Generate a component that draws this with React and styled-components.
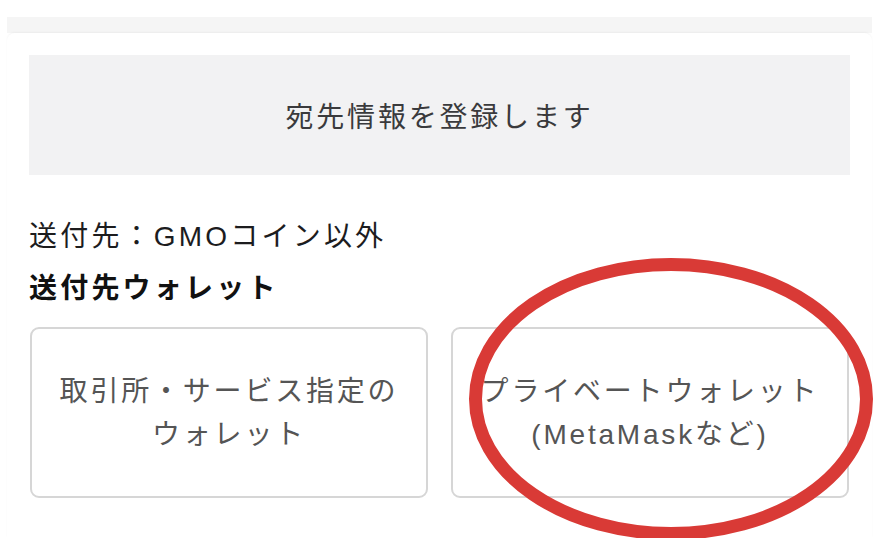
import React from "react";
import styled, { createGlobalStyle } from "styled-components";

const GlobalStyle = createGlobalStyle`
  body {
    margin: 0;
    background: #ffffff;
    font-family: "Liberation Sans", "Noto Sans CJK JP", sans-serif;
  }
`;

const Frame = styled.div`
  width: 865px;
  margin: 17px 0 0 7px;
`;

const TopStrip = styled.div`
  height: 16px;
  background: #f5f5f5;
`;

const Sheet = styled.div`
  background: #ffffff;
  border-radius: 8px 8px 0 0;
  box-shadow: 0 -1px 2px rgba(0, 0, 0, 0.04);
  padding: 22px 22px 40px;
`;

const Banner = styled.div`
  height: 120px;
  background: #f2f2f3;
  display: flex;
  align-items: center;
  justify-content: center;
  font-size: 28px;
  letter-spacing: 2.8px;
  color: #3a3a3c;
`;

const InfoLine = styled.div`
  margin-top: 44px;
  line-height: 36px;
  font-size: 28px;
  letter-spacing: 3.2px;
  color: #1c1c1e;
`;

const SectionTitle = styled.div`
  margin-top: 16px;
  line-height: 36px;
  font-size: 28px;
  font-weight: 700;
  letter-spacing: 3.2px;
  color: #111111;
`;

const Options = styled.div`
  margin-top: 20px;
  display: grid;
  grid-template-columns: 1fr 1fr;
  gap: 23px;
  padding: 0 1px;
`;

const OptionCard = styled.div`
  position: relative;
  height: 171px;
  box-sizing: border-box;
  border: 2px solid #d6d6d6;
  border-radius: 9px;
  display: flex;
  align-items: center;
  justify-content: center;
  text-align: center;
  font-size: 28px;
  line-height: 43px;
  letter-spacing: 2.8px;
  color: #555555;
`;

const Mark = styled.svg`
  position: absolute;
  left: 16px;
  top: -71px;
  overflow: visible;
  pointer-events: none;
`;

function App() {
  return (
    <>
      <GlobalStyle />
      <Frame>
        <TopStrip />
        <Sheet>
          <Banner>宛先情報を登録します</Banner>
          <InfoLine>送付先：GMOコイン以外</InfoLine>
          <SectionTitle>送付先ウォレット</SectionTitle>
          <Options>
            <OptionCard>
              取引所・サービス指定の
              <br />
              ウォレット
            </OptionCard>
            <OptionCard>
              プライベートウォレット
              <br />
              (MetaMaskなど)
              <Mark width="404" height="282" viewBox="0 0 404 282">
                <ellipse
                  cx="202"
                  cy="141"
                  rx="195.5"
                  ry="134.5"
                  fill="none"
                  stroke="#d93a36"
                  strokeWidth="13"
                />
              </Mark>
            </OptionCard>
          </Options>
        </Sheet>
      </Frame>
    </>
  );
}

export default App;
